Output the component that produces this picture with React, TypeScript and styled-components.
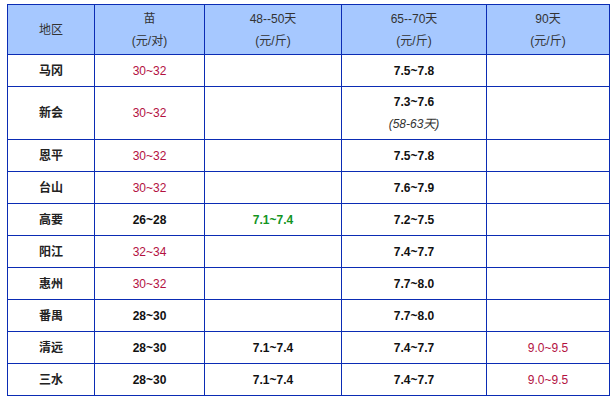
import styled, { createGlobalStyle } from 'styled-components'

const GlobalStyle = createGlobalStyle`
    body {
        margin: 0;
        background: #ffffff;
        font-family: "Liberation Sans", Arial, "Noto Sans CJK SC", sans-serif;
    }
`

const Page = styled.div`
    padding: 4px 0 0 7px;
`

const PriceTable = styled.table`
    width: 603px;
    border-collapse: collapse;
    table-layout: fixed;
    font-size: 12px;
    line-height: 22px;
`

const HeadCell = styled.th<{ $w: number }>`
    width: ${p => p.$w}px;
    height: 49px;
    padding: 0;
    background-color: #a6c8ff;
    border: 1px solid #0b2cb4;
    color: #333333;
    font-weight: normal;
    text-align: center;
    vertical-align: middle;
`

const Row = styled.tr<{ $tall?: boolean }>`
    height: ${p => (p.$tall ? 53 : 32)}px;
`

const Cell = styled.td<{ $color?: string; $bold?: boolean }>`
    padding: 0;
    border: 1px solid #0b2cb4;
    text-align: center;
    vertical-align: middle;
    color: ${p => p.$color || '#111111'};
    font-weight: ${p => (p.$bold ? 'bold' : 'normal')};
`

const Region = styled(Cell)`
    color: #222222;
    font-weight: bold;
`

const Note = styled.i`
    display: block;
    color: #333333;
    font-weight: normal;
`

const RED = '#b3113f'
const GREEN = '#13951f'

type Price = { text: string; tone?: 'red' | 'green' | 'black' }

type Line = {
    region: string
    seedling: Price
    d48?: Price
    d65: Price
    note?: string
    d90?: Price
}

const rows: Line[] = [
    { region: '马冈', seedling: { text: '30~32', tone: 'red' }, d65: { text: '7.5~7.8' } },
    { region: '新会', seedling: { text: '30~32', tone: 'red' }, d65: { text: '7.3~7.6' }, note: '(58-63天)' },
    { region: '恩平', seedling: { text: '30~32', tone: 'red' }, d65: { text: '7.5~7.8' } },
    { region: '台山', seedling: { text: '30~32', tone: 'red' }, d65: { text: '7.6~7.9' } },
    { region: '高要', seedling: { text: '26~28' }, d48: { text: '7.1~7.4', tone: 'green' }, d65: { text: '7.2~7.5' } },
    { region: '阳江', seedling: { text: '32~34', tone: 'red' }, d65: { text: '7.4~7.7' } },
    { region: '惠州', seedling: { text: '30~32', tone: 'red' }, d65: { text: '7.7~8.0' } },
    { region: '番禺', seedling: { text: '28~30' }, d65: { text: '7.7~8.0' } },
    { region: '清远', seedling: { text: '28~30' }, d48: { text: '7.1~7.4' }, d65: { text: '7.4~7.7' }, d90: { text: '9.0~9.5', tone: 'red' } },
    { region: '三水', seedling: { text: '28~30' }, d48: { text: '7.1~7.4' }, d65: { text: '7.4~7.7' }, d90: { text: '9.0~9.5', tone: 'red' } },
]

function PriceCell({ price, children }: { price?: Price; children?: React.ReactNode }) {
    if (!price) return <Cell />
    const color = price.tone === 'red' ? RED : price.tone === 'green' ? GREEN : '#111111'
    return (
        <Cell $color={color} $bold={price.tone !== 'red'}>
            {price.text}
            {children}
        </Cell>
    )
}

export default function App() {
    return (
        <Page>
            <GlobalStyle />
            <PriceTable>
                <thead>
                    <tr>
                        <HeadCell $w={86}>地区</HeadCell>
                        <HeadCell $w={109}>苗<br />(元/对)</HeadCell>
                        <HeadCell $w={136}>48--50天<br />(元/斤)</HeadCell>
                        <HeadCell $w={144}>65--70天<br />(元/斤)</HeadCell>
                        <HeadCell $w={122}>90天<br />(元/斤)</HeadCell>
                    </tr>
                </thead>
                <tbody>
                    {rows.map(r => (
                        <Row key={r.region} $tall={!!r.note}>
                            <Region>{r.region}</Region>
                            <PriceCell price={r.seedling} />
                            <PriceCell price={r.d48} />
                            <PriceCell price={r.d65}>
                                {r.note && <Note>{r.note}</Note>}
                            </PriceCell>
                            <PriceCell price={r.d90} />
                        </Row>
                    ))}
                </tbody>
            </PriceTable>
        </Page>
    )
}
